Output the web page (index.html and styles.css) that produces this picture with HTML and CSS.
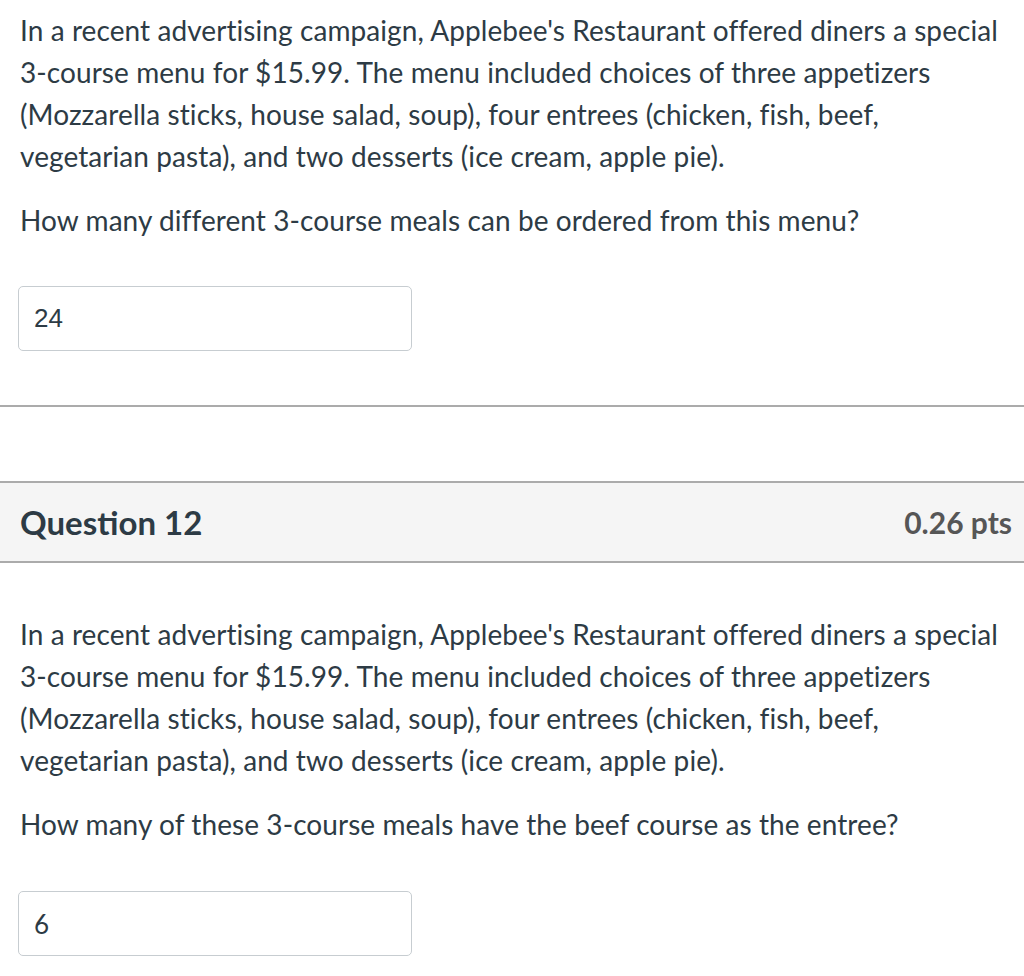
FILE: index.html
```
<!DOCTYPE html>
<html>
<head>
<meta charset="utf-8">
<link rel="stylesheet" href="styles.css">
</head>
<body>
<div class="question first">
  <div class="text">
    <p>In a recent advertising campaign, Applebee's Restaurant offered diners a special 3-course menu for $15.99. The menu included choices of three appetizers (Mozzarella sticks, house salad, soup), four entrees (chicken, fish, beef, vegetarian pasta), and two desserts (ice cream, apple pie).</p>
    <p>How many different 3-course meals can be ordered from this menu?</p>
  </div>
  <div class="answer"><span class="val arial">24</span></div>
</div>
<div class="separator"></div>
<div class="header">
  <h2 class="title">Question 12</h2>
  <span class="pts">0.26 pts</span>
</div>
<div class="question second">
  <div class="text">
    <p>In a recent advertising campaign, Applebee's Restaurant offered diners a special 3-course menu for $15.99. The menu included choices of three appetizers (Mozzarella sticks, house salad, soup), four entrees (chicken, fish, beef, vegetarian pasta), and two desserts (ice cream, apple pie).</p>
    <p>How many of these 3-course meals have the beef course as the entree?</p>
  </div>
  <div class="answer"><span class="val">6</span></div>
</div>
</body>
</html>
```
FILE: styles.css
```
html, body {
  margin: 0;
  padding: 0;
  background: #fff;
}
body {
  font-family: Lato, "Noto Sans", sans-serif;
  color: #2d3b45;
  width: 1024px;
}
.question {
  padding: 0 20px 0 20px;
}
.question.first {
  padding-top: 9px;
}
.question.second {
  padding-top: 50px;
}
.text p {
  margin: 0 0 22px 0;
  font-size: 28px;
  line-height: 42px;
  letter-spacing: 0.08px;
}
.text p:last-child {
  margin-bottom: 0;
}
.answer {
  margin-top: 45px;
  margin-left: -2px;
  width: 377px;
  height: 63px;
  border: 1px solid #c7cdd1;
  border-radius: 5px;
  display: flex;
  align-items: center;
  padding-left: 15px;
  box-sizing: content-box;
}
.second .answer {
  margin-top: 46px;
}
.val {
  font-size: 26px;
  color: #2d3b45;
}
.val.arial {
  font-family: "Liberation Sans", Arial, sans-serif;
}
.separator {
  margin-top: 54px;
  height: 2px;
  background: #ababab;
}
.header {
  margin-top: 74px;
  height: 78px;
  background: #f5f5f5;
  border-top: 2px solid #ababab;
  border-bottom: 2px solid #ababab;
  display: flex;
  align-items: center;
  justify-content: space-between;
  padding: 0 12px 0 20px;
}
.title {
  margin: 0;
  font-size: 33px;
  font-weight: 700;
  color: #2d3b45;
}
.pts {
  font-size: 30px;
  font-weight: 700;
  color: #565656;
}
```
